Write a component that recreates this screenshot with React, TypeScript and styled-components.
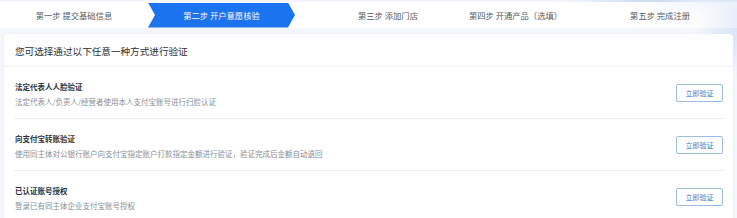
import styled, { createGlobalStyle } from 'styled-components';

const GlobalStyle = createGlobalStyle`
  html, body {
    margin: 0;
    padding: 0;
  }
  body {
    width: 737px;
    height: 218px;
    overflow: hidden;
    background: #f3f6fb;
    font-family: "Noto Sans CJK SC", "Noto Sans", sans-serif;
  }
`;

const Page = styled.div`
  width: 737px;
  height: 218px;
  overflow: hidden;
  background:
    radial-gradient(ellipse 90px 14px at 650px 0px, rgba(170, 195, 240, 0.55), transparent),
    radial-gradient(ellipse 40px 60px at 737px 20px, rgba(200, 218, 245, 0.7), transparent),
    #f3f6fb;
`;

const StepBar = styled.div`
  display: flex;
  align-items: center;
  height: 26px;
  margin-top: 2px;
  background: linear-gradient(90deg, #ffffff 0%, #ffffff 85%, rgba(255, 255, 255, 0.4) 100%);
`;

const Step = styled.div<{ $width?: number; $offset?: number }>`
  flex: none;
  ${(p) => (p.$width ? `width: ${p.$width}px; text-align: center;` : '')}
  margin-left: ${(p) => p.$offset ?? 0}px;
  font-size: 8.3px;
  color: #555a63;
  white-space: nowrap;
  line-height: 26px;
`;

const ActiveStep = styled.div`
  flex: none;
  width: 147px;
  height: 25px;
  display: flex;
  align-items: center;
  justify-content: center;
  background: #1b73f0;
  color: #ffffff;
  font-size: 8.3px;
  clip-path: polygon(0 0, 140px 0, 147px 50%, 140px 100%, 0 100%, 7px 50%);
`;

const Card = styled.div`
  margin: 6px 4px 0 4px;
  background: #ffffff;
  border-radius: 4px;
  box-shadow: 0 0 2px rgba(180, 195, 220, 0.25);
`;

const CardHeader = styled.div`
  height: 31px;
  display: flex;
  align-items: center;
  padding: 1px 0 0 11px;
  font-size: 9.6px;
  color: #2b2f36;
  border-bottom: 1px solid #f0f2f5;
`;

const Row = styled.div`
  height: 51px;
  margin: 0 9px 0 10px;
  display: flex;
  align-items: center;
  justify-content: space-between;
  border-bottom: 1px solid #eef0f3;
  padding-left: 1px;
`;

const RowText = styled.div`
  display: flex;
  flex-direction: column;
  gap: 3px;
  padding-top: 3px;
`;

const RowTitle = styled.div`
  font-size: 7.5px;
  font-weight: 700;
  color: #2d3038;
  line-height: 12px;
`;

const RowDesc = styled.div`
  font-size: 7.5px;
  color: #8a8f99;
  line-height: 12px;
`;

const VerifyButton = styled.button`
  width: 47px;
  height: 18px;
  padding: 0;
  border: 1px solid #9dbbe3;
  border-radius: 2px;
  background: #ffffff;
  color: #4178c4;
  font-family: inherit;
  font-size: 7px;
  margin: 1px 1px 0 0;
`;

const methods = [
  {
    title: '法定代表人人脸验证',
    desc: '法定代表人/负责人/经营者使用本人支付宝账号进行扫脸认证',
  },
  {
    title: '向支付宝转账验证',
    desc: '使用同主体对公银行账户向支付宝指定账户打款指定金额进行验证，验证完成后金额自动退回',
  },
  {
    title: '已认证账号授权',
    desc: '登录已有同主体企业支付宝账号授权',
  },
];

export default function App() {
  return (
    <Page>
      <GlobalStyle />
      <StepBar>
        <Step $width={148}>第一步 提交基础信息</Step>
        <ActiveStep>第二步 开户意愿核验</ActiveStep>
        <Step $offset={63}>第三步 添加门店</Step>
        <Step $offset={51}>第四步 开通产品（选填）</Step>
        <Step $offset={68}>第五步 完成注册</Step>
      </StepBar>
      <Card>
        <CardHeader>您可选择通过以下任意一种方式进行验证</CardHeader>
        {methods.map((m) => (
          <Row key={m.title}>
            <RowText>
              <RowTitle>{m.title}</RowTitle>
              <RowDesc>{m.desc}</RowDesc>
            </RowText>
            <VerifyButton>立即验证</VerifyButton>
          </Row>
        ))}
      </Card>
    </Page>
  );
}
